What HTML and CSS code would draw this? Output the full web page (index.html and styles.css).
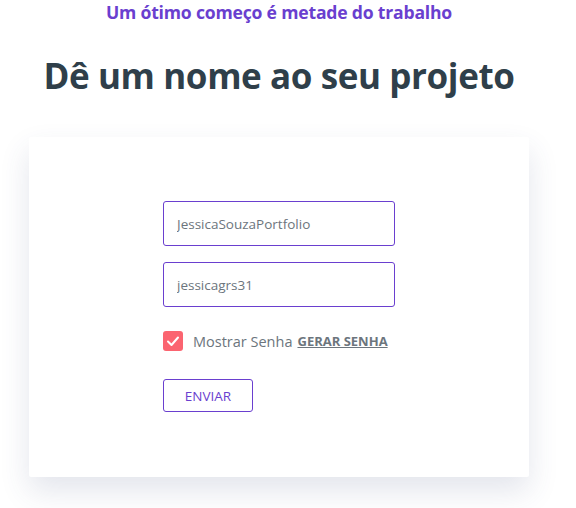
FILE: index.html
```html
<!DOCTYPE html>
<html lang="pt">
<head>
<meta charset="utf-8">
<link rel="stylesheet" href="styles.css">
</head>
<body>
<main class="page">
  <p class="tagline">Um ótimo começo é metade do trabalho</p>
  <h1 class="title">Dê um nome ao seu projeto</h1>
  <section class="card">
    <form class="form">
      <input class="field" type="text" value="JessicaSouzaPortfolio">
      <input class="field" type="text" value="jessicagrs31">
      <div class="options">
        <span class="check">
          <svg viewBox="0 0 20 20" width="20" height="20"><path d="M5 10.5 L8.5 14 L15 6.5" fill="none" stroke="#fff" stroke-width="2" stroke-linecap="round" stroke-linejoin="round"/></svg>
        </span>
        <span class="label">Mostrar Senha</span>
        <a class="gen" href="#">GERAR SENHA</a>
      </div>
      <button class="submit" type="button">ENVIAR</button>
    </form>
  </section>
</main>
</body>
</html>
```
FILE: styles.css
```css
* { box-sizing: border-box; }
html { overflow: hidden; }
html, body { margin: 0; padding: 0; background: #fff; }
body { font-family: "Open Sans", "Noto Sans", sans-serif; }
.page {
  width: 558px;
  height: 508px;
  display: flex;
  flex-direction: column;
  align-items: center;
}
.tagline {
  margin: 0;
  color: #6a3fcf;
  font-weight: 700;
  font-size: 17.6px;
  line-height: 24px;
  letter-spacing: -0.2px;
}
.title {
  margin: 28px 0 0;
  color: #2f3f4a;
  font-weight: 700;
  font-size: 35px;
  line-height: 48px;
  letter-spacing: -0.4px;
}
.card {
  margin-top: 37px;
  width: 500px;
  height: 340px;
  flex: none;
  background: #fff;
  box-shadow: 0 14px 30px rgba(60, 70, 120, 0.14);
  border-radius: 2px;
  display: flex;
  justify-content: center;
  padding-top: 64px;
}
.form {
  width: 232px;
  display: flex;
  flex-direction: column;
}
.field {
  height: 45px;
  border: 1px solid #6a3fcf;
  border-radius: 3px;
  padding: 0 13px;
  font-family: inherit;
  font-size: 13.5px;
  color: #6c757d;
  margin-bottom: 16px;
  outline: none;
}
.options {
  margin-top: 8px;
  display: flex;
  align-items: center;
  height: 20px;
}
.check {
  width: 20px;
  height: 20px;
  border-radius: 3px;
  background: #fb6470;
  display: flex;
}
.label {
  margin-left: 10px;
  font-size: 14.5px;
  color: #6c757d;
}
.gen {
  margin-left: 5px;
  font-size: 13px;
  font-weight: 700;
  color: #6c757d;
  text-decoration: underline;
}
.submit {
  margin-top: 28px;
  width: 90px;
  height: 33px;
  border: 1px solid #6a3fcf;
  border-radius: 3px;
  background: #fff;
  color: #6a3fcf;
  font-family: inherit;
  font-size: 13.5px;
  padding: 0;
}
```
